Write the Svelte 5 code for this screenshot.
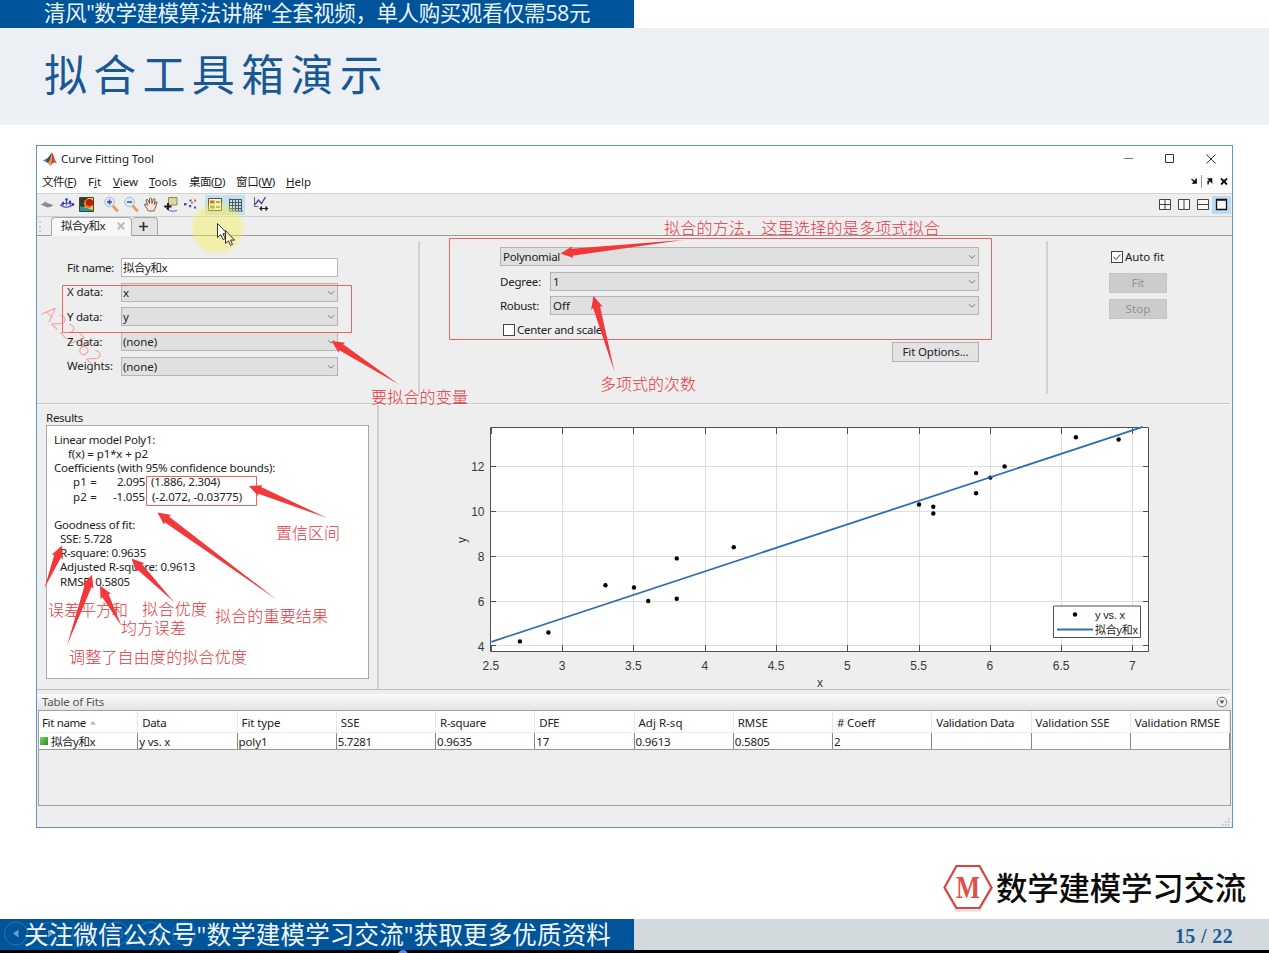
<script>
  // Spreads the letters of a label evenly so that it takes the given width.
  function fit(node, width) {
    const n = [...node.textContent].length;
    const natural = node.getBoundingClientRect().width;
    node.style.letterSpacing = `${(width - natural) / Math.max(1, n)}px`;
  }

  const menus = [
    ['文件(', 'F', ')', 34, 12],
    ['F', 'i', 't', 13, 12],
    ['', 'V', 'iew', 25, 11],
    ['', 'T', 'ools', 28, 12],
    ['桌面(', 'D', ')', 36, 11],
    ['窗口(', 'W', ')', 39, 11],
    ['', 'H', 'elp', 25, 0]
  ];

  const dataRows = [
    ['X data:', 'x', 36, 7],
    ['Y data:', 'y', 35, 7],
    ['Z data:', '(none)', 35, 34],
    ['Weights:', '(none)', 46, 34]
  ];

  const columns = [
    ['Fit name', 44, '拟合y和x', 44],
    ['Data', 24, 'y vs. x', 31],
    ['Fit type', 39, 'poly1', 29],
    ['SSE', 19, '5.7281', 34],
    ['R-square', 46, '0.9635', 35],
    ['DFE', 20, '17', 13],
    ['Adj R-sq', 44, '0.9613', 35],
    ['RMSE', 30, '0.5805', 35],
    ['# Coeff', 38, '2', 6],
    ['Validation Data', 78, '', 0],
    ['Validation SSE', 74, '', 0],
    ['Validation RMSE', 85, '', 0]
  ];

  const points = [
    [2.7, 4.2], [2.9, 4.6], [3.3, 6.7], [3.5, 6.6], [3.6, 6], [3.8, 7.9], [3.8, 6.1], [4.2, 8.4],
    [5.5, 10.3], [5.6, 10.2], [5.6, 9.9], [5.9, 11.7], [5.9, 10.8], [6, 11.5], [6.1, 12], [6.6, 13.3], [6.9, 13.2]
  ];
  const xTicks = [2.5, 3, 3.5, 4, 4.5, 5, 5.5, 6, 6.5, 7];
  const yTicks = [4, 6, 8, 10, 12];
  const px = (x) => 112.4 + (x - 2.5) * 142.55;
  const py = (y) => 240.9 - (y - 4) * 22.44;
  const model = (x) => 2.095 * x - 1.055;

  const notes = [
    ['拟合的方法，这里选择的是多项式拟合', 664, 233.5, 276],
    ['多项式的次数', 600, 390, 96],
    ['要拟合的变量', 371, 403, 97],
    ['置信区间', 276, 538.5, 64],
    ['误差平方和', 48, 616, 80],
    ['拟合优度', 142, 615, 65],
    ['均方误差', 121, 634, 65],
    ['拟合的重要结果', 215, 622, 113],
    ['调整了自由度的拟合优度', 69, 663, 178]
  ];

  const arrows = [
    [560.5, 253.5, 683, 240],
    [593.5, 296, 614.5, 372],
    [331.5, 341, 399, 384.5],
    [249, 486, 327, 518],
    [157.5, 512.5, 276.5, 599.5],
    [62, 545.5, 44.5, 588],
    [131.5, 558.5, 174, 602],
    [92, 575, 67, 645.5],
    [100, 585.5, 121.5, 626]
  ];

  // Tapered arrow: a point at the tail, a shaft that widens, then the head.
  function arrow([tx, ty, sx, sy]) {
    const len = Math.hypot(tx - sx, ty - sy);
    const ux = (tx - sx) / len;
    const uy = (ty - sy) / len;
    const at = (back, side) => `${tx - ux * back - uy * side},${ty - uy * back + ux * side}`;
    return [at(0, 0), at(12.5, 6), at(11.5, 3.6), `${sx},${sy}`, at(11.5, -3.6), at(12.5, -6)].join(' ');
  }
</script>

{#snippet chevron()}
  <svg class="chev" width="8" height="6" viewBox="0 0 8 6"><path d="M1 1.2 4 4.2 7 1.2" /></svg>
{/snippet}

<div class="slide">
  <div class="banner"><span use:fit={546}>清风"数学建模算法讲解"全套视频，单人购买观看仅需58元</span></div>
  <header><h1 use:fit={345}>拟合工具箱演示</h1></header>

  <main>
    <section class="window">
      <div class="titlebar">
        <svg width="14" height="14" viewBox="0 0 14 14">
          <path d="M0 8.5 4 6.5 6 8.5 3.6 10.3z" fill="#3f7fb5" />
          <path d="M4 6.5C6 5.5 7 2 9 .5L7 8.5 5 11 3.6 10.3z" fill="#31517c" />
          <path d="M9 .5C10.5 2 11.5 8 14 11.5 12 10 10.5 10 9.5 11.5 8.500 12.8 7.500 13.600 6.800 13.500 6.500 12 5.500 11 4.500 10.900 7 10 7.500 3 9 .5z" fill="#c8452a" />
          <path d="M9 .5C9 4 9.400 8 8 13L6.600 13.400 5 10.800C7.500 9 8 3 9 .5z" fill="#e99a45" />
        </svg>
        <span class="ttl" use:fit={93}>Curve Fitting Tool</span>
        <svg class="winctl" width="96" height="14" viewBox="0 0 96 14">
          <path d="M2 6.500h9" stroke="#777" />
          <path d="M43.500 2.500h8v8h-8z" />
          <path d="M84.500 2.500l9 9M93.500 2.500l-9 9" />
        </svg>
      </div>

      <nav class="menubar">
        {#each menus as [a, u, b, w, gap]}
          <span class="menu" style="margin-right:{gap}px" use:fit={w}>{a}<u>{u}</u>{b}</span>
        {/each}
        <svg class="dock" width="40" height="16" viewBox="0 0 40 16">
          <path d="M1.500 5 5 8.300M6.200 5.500v3.700H3z" stroke="#111" stroke-width="1.300" fill="#111" />
          <path d="M11.500 1v13" stroke="#999" />
          <path d="M18 10.500V7.500L20 6.500M18.500 4.800h3.200v3.500z" stroke="#111" stroke-width="1.300" fill="#111" />
          <path d="M31 4.500l6 6M37 4.500l-6 6" stroke="#111" stroke-width="1.800" />
        </svg>
      </nav>

      <div class="toolbar">
        <svg width="20" height="20" viewBox="0 0 20 20"><path d="M3.500 9.500q3-1 5-3 1.500 2 3 2l5 1.500q-2 2-6 2.500-2-1-7-3z" fill="#8b8b8b" /></svg>
        <svg width="20" height="20" viewBox="0 0 20 20"><path d="M3 10q7 5 14-1M4 9.500q5-2 12-1M9.500 4v6.500M6 6.500v4M13 5.500v5" stroke="#5555b8" fill="none" stroke-width="1.200" /><g fill="#3535a5"><circle cx="9.500" cy="4.500" r="1.300" /><circle cx="13" cy="7" r="1.200" /><circle cx="6" cy="8.500" r="1.200" /><circle cx="16" cy="9.500" r="1.300" /></g></svg>
        <svg width="20" height="20" viewBox="0 0 20 20">
          <path d="M2.500 2.500h14v14h-14z" fill="#ecd52f" stroke="#4b4322" />
          <path d="M3 3h8Q6 7 8 11.500L3 13.500z" fill="#2f3c34" /><path d="M3 11l13 4v1H3z" fill="#2598a8" />
          <circle cx="11.500" cy="8.500" r="4.600" fill="#ef7a1a" /><circle cx="12.500" cy="7.500" r="3.600" fill="#c51818" />
        </svg>
        <i class="sep"></i>
        {#each ['M6 7h5M8.500 4.500v5', 'M6 7h5'] as sign}
          <svg width="20" height="20" viewBox="0 0 20 20"><path d="M12 11l4 4.500" stroke="#dfa45d" stroke-width="3" stroke-linecap="round" /><circle cx="8.500" cy="7" r="4.800" fill="#dcebf7" stroke="#a9bdcf" /><path d={sign} stroke="#2b4fa0" stroke-width="1.500" /></svg>
        {/each}
        <svg width="20" height="20" viewBox="0 0 20 20"><path d="M7.500 16 3.500 10q0-1.500 1.500-1l1.500 1.500L5 5q1-1.500 2 0l1.500 3.500V3.500q1-1.500 2 0l.5 5 1.300-4.500q1.200-1 1.700.5l-.7 5 1.500-2.500q1.500-.7 1.200.7l-2 6-1 2.300z" fill="#fbe6d3" stroke="#66504a" stroke-width=".9" /></svg>
        <svg width="20" height="20" viewBox="0 0 20 20"><path d="M3 10.500q5 8 13 5" stroke="#5b5bd0" fill="none" /><path d="M7.500 2.500h8.500v7.500h-8.500z" fill="#dcd99c" stroke="#8f8c55" /><path d="M7 8v7M3.500 11.500h7" stroke="#111" stroke-width="1.800" /></svg>
        <svg width="20" height="20" viewBox="0 0 20 20"><g fill="#4a4ac4"><path d="M3 8h2.500v2.500H3zM8 10h2.200v2.200H8zM8.500 4.500h2v2h-2zM13 11.500h2v2h-2z" /></g><g fill="#dd6868"><path d="M13 4.500h2.200v2.200H13zM10 6.700h2v2h-2z" /></g></svg>
        <i class="sep"></i>
        <svg class="on" width="20" height="20" viewBox="0 0 20 20"><path d="M3.500 3.500h13v12h-13z" fill="#fbf4ce" stroke="#55543f" /><path d="M5 5.500h4.500v3H5z" fill="#d06030" /><path d="M5 10.500h4.500v3H5z" fill="#8c9c38" /><path d="M11 7H15M11 12H15" stroke="#777" stroke-width="1.600" /></svg>
        <svg class="on" width="20" height="20" viewBox="0 0 20 20"><path d="M4.500 3.500v12.500h13M7.500 4v12M10.500 4v12M13.500 4v12M16.500 4v12M5 4.500h12M5 7.500h12M5 10.500h12M5 13.500h12" stroke="#4b555c" stroke-width="1" fill="none" /></svg>
        <i class="sep wide"></i>
        <svg width="20" height="20" viewBox="0 0 20 20"><path d="M3.500 2v9.500h4" stroke="#666" fill="none" /><path d="M4 9.500 7.500 5l3 3.500L14.500 2" stroke="#4444b8" stroke-width="1.400" fill="none" /><path d="M9 13.500h7.500M11 11.500 9 13.500 11 15.500M14.500 11.500 16.500 13.500 14.500 15.500" stroke="#222" stroke-width="1.200" fill="none" /></svg>
        <div class="layouts">
          <svg width="19" height="18" viewBox="0 0 19 18"><path d="M4.500 3.500h11v10h-11zM10 3v11M4 8.500h12" /></svg>
          <svg width="19" height="18" viewBox="0 0 19 18"><path d="M4.500 3.500h11v10h-11zM10 3v11" /></svg>
          <svg width="19" height="18" viewBox="0 0 19 18"><path d="M4.500 3.500h11v10h-11zM4 8.500h12" /></svg>
          <svg class="sel" width="19" height="18" viewBox="0 0 19 18"><path d="M4.500 3.500h10v10h-10zM4 4h11" stroke-width="1.300" /></svg>
        </div>
      </div>

      <div class="tabs">
        <i class="grip"></i>
        <div class="tab"><span use:fit={44}>拟合y和x</span><svg width="8" height="8" viewBox="0 0 8 8"><path d="M.8.8l6.400 6.400M7.200.8.8 7.200" stroke="#bcbcbc" stroke-width="2" /></svg></div>
        <div class="tab add"><svg width="9" height="9" viewBox="0 0 9 9"><path d="M4.500 0v9M0 4.500h9" stroke="#333" stroke-width="1.700" /></svg></div>
      </div>

      <div class="settings">
        <div class="data">
          <div class="row"><div class="lab"><span use:fit={47}>Fit name:</span></div><div class="box input"><span use:fit={44}>拟合y和x</span></div></div>
          {#each dataRows as [label, value, lw, vw]}
            <div class="row"><div class="lab"><span use:fit={lw}>{label}</span></div><div class="box"><span use:fit={vw}>{value}</span>{@render chevron()}</div></div>
          {/each}
        </div>
        <div class="model">
          <div class="box"><span use:fit={57}>Polynomial</span>{@render chevron()}</div>
          <div class="row"><div class="lab"><span use:fit={41}>Degree:</span></div><div class="box">1{@render chevron()}</div></div>
          <div class="row"><div class="lab"><span use:fit={39}>Robust:</span></div><div class="box"><span use:fit={17}>Off</span>{@render chevron()}</div></div>
          <div class="check"><i></i><span use:fit={85}>Center and scale</span></div>
          <div class="button opts"><span use:fit={66}>Fit Options...</span></div>
        </div>
        <div class="actions">
          <div class="check"><i><svg width="10" height="10" viewBox="0 0 10 10"><path d="M1.500 5 4 7.500 8.500 2.500" stroke="#333" fill="none" /></svg></i><span use:fit={39}>Auto fit</span></div>
          <div class="button off"><span use:fit={13}>Fit</span></div>
          <div class="button off"><span use:fit={25}>Stop</span></div>
        </div>
      </div>

      <div class="output">
        <div class="results">
          <span class="cap" use:fit={37}>Results</span>
          <div class="report">
            <p><span use:fit={101}>Linear model Poly1:</span></p>
            <p class="in2"><span use:fit={80}>f(x) = p1*x + p2</span></p>
            <p><span use:fit={221}>Coefficients (with 95% confidence bounds):</span></p>
            <p class="coef"><span class="c1"><span use:fit={24}>p1 =</span></span><span class="c2"><span use:fit={28}>2.095</span></span><span class="c3" use:fit={69}>(1.886, 2.304)</span></p>
            <p class="coef"><span class="c1"><span use:fit={24}>p2 =</span></span><span class="c2"><span use:fit={32}>-1.055</span></span><span class="c3 more" use:fit={90}>(-2.072, -0.03775)</span></p>
            <p>&nbsp;</p>
            <p><span use:fit={81}>Goodness of fit:</span></p>
            <p class="in1"><span use:fit={52}>SSE: 5.728</span></p>
            <p class="in1"><span use:fit={86}>R-square: 0.9635</span></p>
            <p class="in1"><span use:fit={135}>Adjusted R-square: 0.9613</span></p>
            <p class="in1"><span use:fit={70}>RMSE: 0.5805</span></p>
          </div>
        </div>
        <svg class="plot" width="850" height="284" viewBox="0 0 850 284">
          <path d="M111.500 22.500h658v224h-658z" fill="#fff" />
          {#each xTicks.slice(1) as t}<path class="grid" d="M{Math.floor(px(t)) + 0.5} 23v223" />{/each}
          {#each yTicks as t}<path class="grid" d="M112 {Math.floor(py(t)) + 0.5}h657" />{/each}
          {#each xTicks as t}
            <path class="tick" d="M{Math.floor(px(t)) + 0.5} 246v-6M{Math.floor(px(t)) + 0.5} 23v6" />
            <text x={px(t) - 0.500} y="264.500" text-anchor="middle">{t}</text>
          {/each}
          {#each yTicks as t}
            <path class="tick" d="M112 {Math.floor(py(t)) + 0.5}h5M769 {Math.floor(py(t)) + 0.5}h-5" />
            <text x="105.500" y={py(t) + 5} text-anchor="end">{t}</text>
          {/each}
          <path class="tick" d="M111.500 22.500h658v224h-658z" fill="none" />
          {#each points as [x, y]}<circle cx={px(x)} cy={py(y)} r="2.200" />{/each}
          <line x1={px(2.500)} y1={py(model(2.500))} x2={px(7.070)} y2={py(model(7.070))} stroke="#2f6eb0" stroke-width="1.800" />
          <text x="441" y="281.500" text-anchor="middle">x</text>
          <text transform="translate(86.500 135) rotate(-90)" text-anchor="middle">y</text>
          <path class="tick" d="M674.500 201h87v31.500h-87z" fill="#fff" />
          <circle cx="696" cy="209.500" r="2.200" />
          <path d="M678 224.500h36" stroke="#2f6eb0" stroke-width="1.800" />
          <text class="leg" x="716" y="214" textLength="30">y vs. x</text>
          <text class="leg" x="716" y="228.500" textLength="43">拟合y和x</text>
        </svg>
      </div>

      <div class="fits">
        <div class="fitshead"><span use:fit={62}>Table of Fits</span>
          <svg width="12" height="12" viewBox="0 0 12 12"><circle cx="6" cy="6" r="4.800" fill="#f2f2f2" stroke="#777" /><path d="M3.500 4.500h5L6 8z" fill="#555" /></svg>
        </div>
        <div class="table">
          <div class="tr th">
            {#each columns as [name, w], i}
              <div><span use:fit={w}>{name}</span>{#if i === 0}<svg width="6" height="4" viewBox="0 0 6 4"><path d="M0 3.500 3 0l3 3.500z" fill="#b5b5b5" /></svg>{/if}</div>
            {/each}
          </div>
          <div class="tr td">
            {#each columns as [, , value, w], i}
              <div>{#if i === 0}<i class="swatch"></i>{/if}{#if value}<span use:fit={w}>{value}</span>{/if}</div>
            {/each}
          </div>
        </div>
      </div>
      <div class="status"><svg width="8" height="8" viewBox="0 0 8 8"><path d="M6 0h1.500v1.500H6zM3 3h1.500v1.500H3zM6 3h1.500v1.500H6zM0 6h1.500v1.500H0zM3 6h1.500v1.500H3zM6 6h1.500v1.500H6z" fill="#bbb" /></svg></div>
    </section>

    <div class="brand">
      <svg width="52" height="50" viewBox="0 0 52 50">
        <path d="M14.500 6h23L50 27 37.500 48.500h-23L2.500 27z" fill="none" stroke="#bbb" stroke-width="2" opacity=".5" />
        <path d="M14.500 4h23L49.500 25.500 37.500 46h-23L2.500 25.500z" fill="#fff" stroke="#d6453f" stroke-width="2.200" />
        <text x="26" y="36" text-anchor="middle" textLength="24" lengthAdjust="spacingAndGlyphs">M</text>
      </svg>
      <span use:fit={250}>数学建模学习交流</span>
    </div>
  </main>

  <footer>
    <div class="follow">
      <svg class="controls" width="634" height="31" viewBox="0 0 634 31">
        {#each [16, 50, 84, 117, 150, 184] as cx}<circle {cx} cy="14.500" r="11.500" />{/each}
        <path class="solid" d="M18.500 10.500v8l-5.500-4zM48 10.500v8l6-4z" />
        <path d="M79 18l8-8M112 10h10v8h-10zM154 18l4 4M179 14h10" /><circle cx="150" cy="14" r="4" />
      </svg>
      <span use:fit={587}>关注微信公众号"数学建模学习交流"获取更多优质资料</span>
    </div>
    <div class="page"><span use:fit={58}>15 / 22</span></div>
  </footer>
  <div class="edge"><i></i></div>

  <svg class="overlay" width="1269" height="953" viewBox="0 0 1269 953">
    <defs>
      <radialGradient id="glow"><stop offset="0" stop-color="#f7f04e" /><stop offset=".8" stop-color="#f7f04e" /><stop offset="1" stop-color="#f7f04e" stop-opacity="0" /></radialGradient>
    </defs>
    <circle cx="217.500" cy="228" r="28" fill="url(#glow)" opacity=".42" />
    <g class="frames">
      <path d="M62.500 285.500h289v47h-289z" />
      <path d="M449.500 238.500h542v101h-542z" />
      <path d="M146.500 476.500h110v29h-110z" />
    </g>
    <text class="mark" transform="translate(41 314) rotate(45)" textLength="74">A22762</text>
    {#each notes as [text, x, y, w]}<text class="note" {x} {y} textLength={w}>{text}</text>{/each}
    {#each arrows as a}<polygon points={arrow(a)} fill="#f2383b" />{/each}
    <g fill="#fff" stroke="#333" stroke-width="1">
      <path d="M217.500 223.500v14l3.200-3 2.300 5 2.200-1-2.300-4.800h4.400z" />
      <path d="M225.500 230.500v13l3-2.700 2 4.600 2-1-2-4.300h4z" fill="#fbf8c8" />
    </g>
  </svg>
</div>

<style>
  :global(body) { margin: 0; background: #fff; }
  * { box-sizing: border-box; }
  .slide {
    position: relative; width: 1269px; height: 953px; overflow: hidden; background: #fff;
    display: flex; flex-direction: column; color: #222;
    font: 11.500px/14px "Noto Sans", "Open Sans", "Noto Sans CJK SC", sans-serif;
  }
  span { display: inline-block; white-space: pre; }
  svg { display: block; flex: none; }
  .banner { width: 634px; height: 28px; padding-left: 44px; background: #005499; color: #e9f3fb; font: 21.500px/26px "Open Sans", "Noto Sans CJK SC", sans-serif; }
  header { height: 97px; padding: 15px 0 0 44px; background: #ecf0f4; }
  h1 { display: inline-block; white-space: pre; margin: 0; color: #185894; font: 400 43px/58px KaiTi, "Noto Sans CJK SC", serif; }
  main { height: 794px; padding: 20px 36px 0; }
  .window { width: 1197px; height: 683px; border: 1px solid #5a97c6; background: #eee; display: flex; flex-direction: column; }
  .titlebar { height: 26px; padding: 0 13px 0 6px; display: flex; align-items: center; background: #fff; }
  .ttl { margin-left: 4px; }
  .winctl { margin-left: auto; margin-right: 1px; stroke: #333; fill: none; }
  .menubar { height: 21px; padding: 0 3px 1px 5px; display: flex; align-items: center; background: #fff; }
  .menu { flex: none; }
  u { text-underline-offset: 1px; }
  .dock { margin-left: auto; fill: none; margin-right: -1px; }
  .toolbar { height: 24px; border-top: 1px solid #d3d3d3; border-bottom: 1px solid #cfcfcf; display: flex; align-items: center; }
  .sep { width: 4px; flex: none; }
  .sep.wide { width: 6px; }
  .on { background: #c6e0ef; }
  .layouts { margin-left: auto; display: flex; margin-right: 1px; }
  .layouts svg { fill: #f8f8f8; stroke: #444; }
  .layouts .sel { background: #bcdcf4; stroke: #111; }
  .tabs { height: 19px; padding-left: 1px; display: flex; border-bottom: 1px solid #9a9a9a; }
  .grip { width: 5px; margin: 4px 7px 3px 1px; border-left: 2px dotted #ccc; }
  .tab { width: 81px; height: 19px; padding: 0 6px 1px 9px; display: flex; justify-content: space-between; align-items: center; background: #f7f7f7; border: 1px solid #aaa; border-bottom-color: #f7f7f7; border-radius: 4px 4px 0 0; }
  .tab.add { width: 26px; padding: 0 3px 0 0; justify-content: center; background: #e4e4e4; border-bottom: 0; height: 18px; border-left: 0; }
  .settings { height: 168px; display: grid; grid-template-columns: 383px 628px 1fr; border-bottom: 1px solid #c8c8c8; padding-top: 5px; margin-right: 2px; }
  .settings > div { height: 153px; }
  .data, .model { border-right: 2px solid #d2d2d2; }
  .data { padding: 17px 80px 0 30px; display: flex; flex-direction: column; gap: 5.700px; }
  .row { display: flex; align-items: center; }
  .data .lab { width: 54px; flex: none; }
  .box { position: relative; flex: 1; height: 19px; line-height: 17px; padding: 0 2px; border: 1px solid #b5b5b5; background: #e0e0e0; }
  .data .box { padding-left: 1px; }
  .box.input { background: #fff; }
  .chev { position: absolute; right: 2px; top: 6px; fill: none; stroke: #777; }
  .model { padding: 6px 67px 0 80px; display: flex; flex-direction: column; }
  .model > .box { flex: none; margin-bottom: 6px; }
  .model .row { margin-bottom: 5px; }
  .model .lab { width: 50px; }
  .check { display: flex; align-items: center; height: 14px; gap: 2px; }
  .check i { width: 12px; height: 12px; border: 1px solid #444; background: #fff; }
  .model .check { margin: 3px 0 0 3px; }
  .button { height: 20px; display: flex; justify-content: center; align-items: center; border: 1px solid #b0b0b0; background: #e3e3e3; }
  .opts { width: 87px; align-self: flex-end; margin-top: 5px; }
  .actions { padding: 9px 0 0 61px; }
  .actions .check { padding-left: 2px; margin-bottom: 9px; }
  .button.off { width: 58px; height: 20px; margin-bottom: 6px; background: #ccc; border-color: #c5c5c5; color: #929292; }
  .output { height: 286px; display: flex; border-bottom: 1px solid #bbb; margin: 0 2px 0 0; border-top: 1px solid #f8f8f8; }
  .results { width: 342px; flex: none; padding: 6px 8px 0 9px; border-right: 2px solid #d0d0d0; }
  .cap { line-height: 14px; }
  .report { height: 254px; padding: 7px 0 0 7px; background: #fff; border: 1px solid #a9a9a9; }
  .report p { margin: 0; height: 14.170px; line-height: 14.170px; display: flex; }
  .in1 { padding-left: 6px; }
  .in2 { padding-left: 14px; }
  .coef { padding-left: 19px; }
  .report .c1 { width: 36px; }
  .c2 { width: 36px; text-align: right; }
  .c3 { margin-left: 6px; }
  .c3.more { margin-left: 7px; }
  .plot text { font: 12px "Liberation Sans", sans-serif; fill: #3a3a3a; }
  .plot text.leg { font: 11px "Liberation Sans", "Noto Sans CJK SC", sans-serif; fill: #222; }
  .grid { stroke: #dedede; }
  .tick { stroke: #505050; }
  .fits { margin: 4px 1px 0 1px; }
  .fitshead { height: 16px; padding: 0 3px 0 4px; display: flex; align-items: center; justify-content: space-between; color: #555; background: linear-gradient(#fbfbfb, #e4e4e4); }
  .table { height: 96px; border: 1px solid #a0a0a0; }
  .tr { display: grid; grid-template-columns: repeat(12, 1fr); background: #fff; }
  .tr > div { display: flex; align-items: center; min-width: 0; white-space: nowrap; }
  .th > div { height: 22px; padding-top: 3px; padding-left: 4px; border-right: 1px solid #e6e6e6; border-bottom: 1px solid #eee; }
  .th > div:first-child { padding-left: 3px; gap: 4px; }
  .td { border-bottom: 1px solid #999; }
  .td > div { height: 16px; border-right: 1px solid #888; padding: 1px 0 0 1px; }
  .swatch { width: 8px; height: 8px; margin: 0 3px 1px 0; background: linear-gradient(135deg, #7bd06a, #2f8b25); }
  .status { flex: 1; display: flex; justify-content: flex-end; align-items: flex-end; padding: 0 2px 1px 0; }
  .brand { height: 50px; margin: 34px -13px 0 0; display: flex; justify-content: flex-end; align-items: center; gap: 2px; font: 500 31.500px/50px "Noto Sans CJK SC", sans-serif; color: #0c0c0c; }
  .brand span { margin-top: -3px; }
  .brand text { font: bold 31px "Liberation Serif", serif; fill: #e0504a; }
  footer { height: 31px; display: flex; }
  .follow { position: relative; width: 634px; padding-left: 24px; background: #005499; color: #f1f7fc; font: 24.500px/31px "Open Sans", "Noto Sans CJK SC", sans-serif; }
  .follow span { position: relative; }
  .controls { position: absolute; left: 0; top: 0; fill: none; stroke: #2e73ad; }
  .controls .solid { fill: #6c9fc8; stroke: none; }
  .page { flex: 1; padding: 3px 36px 0 0; text-align: right; background: #d3dadd; color: #1b5a96; font: bold 20px/28px "Liberation Serif", serif; }
  .edge { height: 3px; background: #000; overflow: hidden; }
  .edge i { display: block; width: 10px; height: 10px; margin-left: 398px; border-radius: 50%; background: #6a86d8; }
  .overlay { position: absolute; left: 0; top: 0; pointer-events: none; }
  .frames { fill: none; stroke: #ec6366; }
  .note { font: 300 16px SimSun, "Noto Sans CJK SC", serif; fill: #e5363d; }
  .mark { font: 300 20px "Open Sans", sans-serif; fill: #f58080; opacity: .75; }
</style>
